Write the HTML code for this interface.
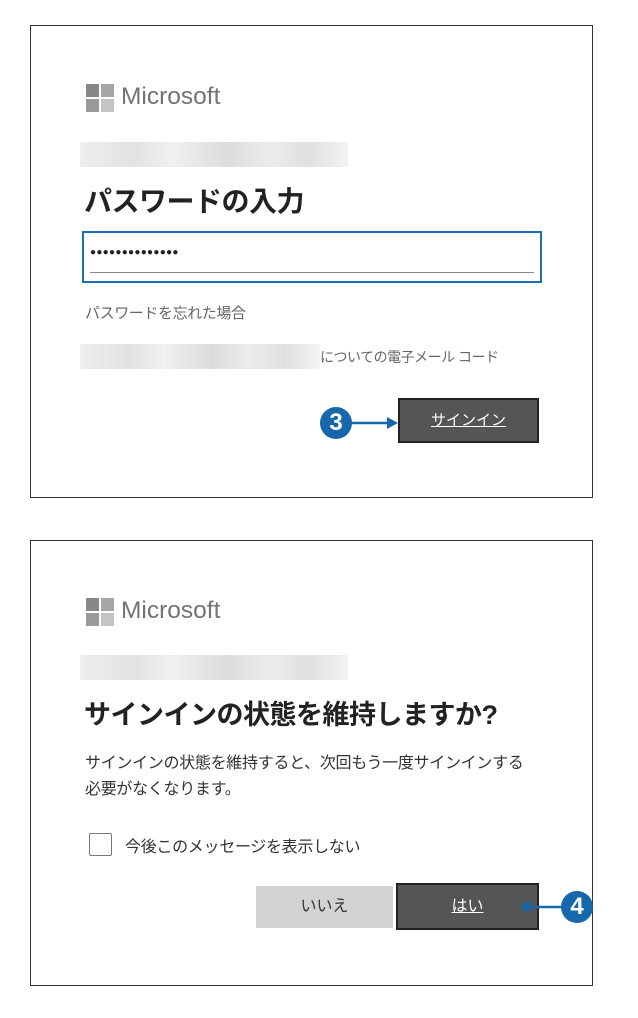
<!DOCTYPE html>
<html><head><meta charset="utf-8"><style>
body{margin:0;width:638px;height:1018px;background:#fff;position:relative;font-family:"Liberation Sans","Noto Sans CJK JP",sans-serif;overflow:hidden}
.abs{position:absolute}
.box{position:absolute;left:30px;width:561px;border:1.5px solid #333;background:#fff}
.logo{position:absolute;width:28px;height:28px}
.logo i{position:absolute;width:13px;height:13px}
.ms{position:absolute;font-size:24.5px;color:#737373;letter-spacing:0}
.blur{position:absolute;background:linear-gradient(90deg,#eee,#e2e2e2 20%,#f0f0f0 35%,#dcdcdc 55%,#ececec 70%,#e0e0e0 85%,#f3f3f3)}
.btn{position:absolute;color:#fff;background:#555;border:2px solid #222;box-sizing:border-box;text-align:center;font-size:15px;text-decoration:underline}
.circ{position:absolute;width:32px;height:32px;border-radius:50%;background:#1767ad;color:#fff;font-weight:bold;font-size:24px;text-align:center;line-height:32px;font-family:"Liberation Sans Narrow","Liberation Sans",sans-serif}
</style></head><body>
<div class="box" style="top:25px;height:471px"></div>
<div class="logo" style="left:86px;top:84px"><i style="left:0;top:0;background:#888"></i><i style="left:15px;top:0;background:#a6a6a6"></i><i style="left:0;top:15px;background:#9a9a9a"></i><i style="left:15px;top:15px;background:#c4c4c4"></i></div>
<div class="ms" style="left:121px;top:83px">Microsoft</div>
<div class="blur" style="left:80px;top:142px;width:268px;height:25px"></div>
<div class="abs" style="left:84px;top:180px;font-size:28px;color:#222;font-weight:bold;letter-spacing:-0.5px">パスワードの入力</div>
<div class="abs" style="left:82px;top:231px;width:460px;height:52px;border:2px solid #1a6fba;box-sizing:border-box"></div>
<div class="abs" style="left:90px;top:272px;width:444px;height:1px;background:#888"></div>
<div class="abs" style="left:90px;top:247px;font-size:10px;letter-spacing:0.3px;color:#222">●●●●●●●●●●●●●●</div>
<div class="abs" style="left:85px;top:302px;font-size:15px;color:#666;letter-spacing:-0.4px">パスワードを忘れた場合</div>
<div class="blur" style="left:80px;top:344px;width:240px;height:25px"></div>
<div class="abs" style="left:320px;top:347px;font-size:14px;color:#666;letter-spacing:-0.5px">についての電子メール コード</div>
<div class="circ" style="left:320px;top:407px">3</div>
<svg class="abs" style="left:351px;top:416px" width="48" height="14"><line x1="0" y1="7" x2="38" y2="7" stroke="#1767ad" stroke-width="2.5"/><path d="M36 1 L47 7 L36 13 Z" fill="#1767ad"/></svg>
<div class="btn" style="left:398px;top:398px;width:141px;height:45px;line-height:41px">サインイン</div>

<div class="box" style="top:540px;height:444px"></div>
<div class="logo" style="left:86px;top:598px"><i style="left:0;top:0;background:#888"></i><i style="left:15px;top:0;background:#a6a6a6"></i><i style="left:0;top:15px;background:#9a9a9a"></i><i style="left:15px;top:15px;background:#c4c4c4"></i></div>
<div class="ms" style="left:121px;top:597px">Microsoft</div>
<div class="blur" style="left:80px;top:655px;width:268px;height:25px"></div>
<div class="abs" style="left:84px;top:693px;font-size:27px;color:#222;font-weight:bold;letter-spacing:-0.5px">サインインの状態を維持しますか?</div>
<div class="abs" style="left:85px;top:751px;font-size:16px;color:#333;line-height:26px;letter-spacing:-0.3px">サインインの状態を維持すると、次回もう一度サインインする<br>必要がなくなります。</div>
<div class="abs" style="left:89px;top:833px;width:23px;height:23px;border:1.5px solid #777;border-radius:2px;box-sizing:border-box"></div>
<div class="abs" style="left:125px;top:833px;font-size:16px;color:#333;letter-spacing:-0.3px">今後このメッセージを表示しない</div>
<div class="abs" style="left:256px;top:886px;width:137px;height:42px;background:#d2d2d2;color:#333;text-align:center;line-height:42px;font-size:16px">いいえ</div>
<div class="btn" style="left:396px;top:883px;width:143px;height:47px;line-height:43px;font-size:16px">はい</div>
<div class="circ" style="left:561px;top:891px">4</div>
<svg class="abs" style="left:518px;top:900px" width="48" height="14"><line x1="10" y1="7" x2="46" y2="7" stroke="#1767ad" stroke-width="2.5"/><path d="M12 1 L1 7 L12 13 Z" fill="#1767ad"/></svg>
</body></html>
